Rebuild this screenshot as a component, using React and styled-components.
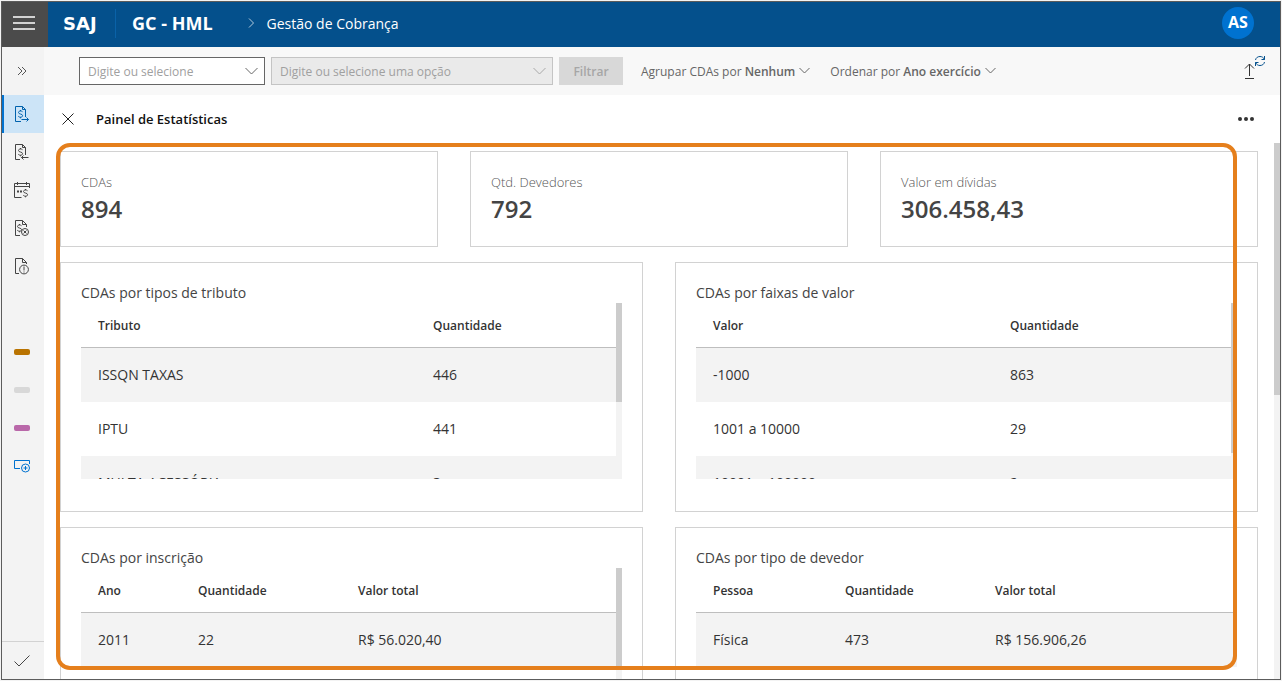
import React from "react";
import styled, { createGlobalStyle } from "styled-components";

const GlobalStyle = createGlobalStyle`
  * { box-sizing: border-box; }
  body {
    margin: 0;
    background: #f3f3f3;
    color: #333;
    font-family: "Open Sans", "Noto Sans", sans-serif;
    font-size: 14px;
  }
  button, input { font: inherit; color: inherit; }
  h1, h2, p, dl, dd { margin: 0; }
`;

const Frame = styled.div`
  position: relative;
  display: flex;
  flex-direction: column;
  height: calc(100vh - 2px);
  margin: 1px;
  border: 1px solid #5c5c5c;
  background: #fff;
`;

const Header = styled.header`
  display: flex;
  flex: none;
  height: 45px;
  background: #04508c;
  color: #fff;
`;

const HeaderContent = styled.div`
  display: flex;
  align-items: center;
  flex: 1;
  padding: 0 26px 3px 0;
`;

const PlainButton = styled.button`
  display: inline-flex;
  align-items: center;
  justify-content: center;
  padding: 0;
  border: 0;
  background: transparent;
  cursor: pointer;
`;

const MenuButton = styled(PlainButton)`
  width: 46px;
  padding-bottom: 4px;
  padding-right: 2px;
  background: #4b4b4b;
  color: #fff;
`;

const Brand = styled.a`
  width: 67px;
  padding-left: 15px;
  color: #fff;
  font-family: "DejaVu Sans", sans-serif;
  font-size: 18px;
  font-weight: 700;
  text-decoration: none;
`;

const Environment = styled.span`
  margin-right: 35px;
  padding-left: 16px;
  border-left: 1px solid #0a62a8;
  font-size: 18px;
  font-weight: 700;
  line-height: 29px;
`;

const CrumbArrow = styled.svg`
  flex: none;
  opacity: 0.7;
`;

const Crumb = styled.span`
  margin-left: 12px;
`;

const Avatar = styled(PlainButton)`
  width: 32px;
  height: 32px;
  margin-left: auto;
  padding-bottom: 2px;
  border-radius: 50%;
  background: #0072d0;
  color: #fff;
  font-size: 16px;
  font-weight: 700;
`;

const Body = styled.div`
  display: flex;
  flex: 1;
  min-height: 0;
`;

const Sidebar = styled.nav`
  display: flex;
  flex-direction: column;
  flex: none;
  width: 42px;
  background: #f3f3f3;
`;

const ExpandButton = styled(PlainButton)`
  height: 48px;
  padding-right: 2px;
  color: #555;
`;

const NavButton = styled(PlainButton)`
  height: 38px;
  border-left: 2px solid ${(p) => (p.$active ? "#0072d0" : "transparent")};
  padding-right: 4px;
  background: ${(p) => (p.$active ? "#cce4f7" : "transparent")};
  color: ${(p) => (p.$active ? "#0062ad" : p.$accent ? "#0072d0" : "#444")};
`;

const TagGroup = styled.div`
  display: flex;
  flex-direction: column;
  margin-top: 48px;
`;

const Tag = styled.span`
  width: 16px;
  height: 6px;
  border-radius: 2px;
  background: ${(p) => p.$color};
`;

const ConfirmButton = styled(PlainButton)`
  height: 38px;
  margin-top: auto;
  padding-right: 2px;
  border-top: 1px solid #d2d2d2;
  color: #444;
`;

const Main = styled.main`
  display: flex;
  flex-direction: column;
  flex: 1;
  min-width: 0;
`;

const Toolbar = styled.div`
  display: flex;
  align-items: center;
  flex: none;
  height: 48px;
  padding: 0 14px 0 35px;
  background: #f8f8f8;
  color: #666;
  font-size: 12px;
`;

const Combo = styled.div`
  display: flex;
  align-items: center;
  width: ${(p) => p.$width}px;
  height: 28px;
  margin-right: 6px;
  padding: 0 6px 0 8px;
  border: 1px solid ${(p) => (p.$disabled ? "#c4c4c4" : "#666")};
  background: ${(p) => (p.$disabled ? "#eaeaea" : "#fff")};
  color: ${(p) => (p.$disabled ? "#a8a8a8" : "#666")};
`;

const ComboInput = styled.input`
  flex: 1;
  min-width: 0;
  padding: 0;
  border: 0;
  outline: 0;
  background: transparent;
  &::placeholder { color: #a0a0a0; opacity: 1; }
`;

const FilterButton = styled.button`
  width: 64px;
  height: 28px;
  margin-right: 18px;
  padding: 0;
  border: 0;
  background: #d8d8d8;
  color: #a6a6a6;
  font-weight: 600;
`;

const SortButton = styled(PlainButton)`
  gap: 4px;
  margin-right: 20px;
  b { font-weight: 600; }
`;

const SyncButton = styled(PlainButton)`
  margin-left: auto;
`;

const PanelHeader = styled.div`
  display: flex;
  align-items: center;
  flex: none;
  height: 48px;
  padding: 0 26px 0 18px;
`;

const PanelTitle = styled.h1`
  margin-left: 22px;
  color: #111;
  font-size: 13px;
  font-weight: 600;
`;

const MoreButton = styled(PlainButton)`
  margin-left: auto;
`;

const Scroller = styled.div`
  display: flex;
  min-height: 0;
  ${(p) => (p.$height ? `height: ${p.$height}px;` : "flex: 1;")}
`;

const ScrollView = styled.div`
  flex: 1;
  min-width: 0;
  overflow: hidden auto;
  scrollbar-width: none;
`;

const ScrollTrack = styled.div`
  flex: none;
  width: 6px;
  background: #f3f3f3;
`;

const ScrollThumb = styled.div`
  height: ${(p) => p.$share}%;
  background: #ccc;
`;

const Grid = styled.div`
  display: grid;
  grid-template-columns: repeat(6, 1fr);
  column-gap: 32px;
  row-gap: 15px;
  padding: 8px 16px;
`;

const Stat = styled.dl`
  grid-column: span 2;
  height: 96px;
  padding: 20px;
  border: 1px solid #d2d2d2;
`;

const StatLabel = styled.dt`
  color: #555;
  font-size: 13px;
  font-weight: 300;
  line-height: 20px;
`;

const StatValue = styled.dd`
  color: #444;
  font-size: 24px;
  font-weight: 600;
  line-height: 34px;
`;

const Card = styled.section`
  grid-column: span 3;
  height: 250px;
  padding: 20px;
  border: 1px solid #d2d2d2;
`;

const CardTitle = styled.h2`
  color: #444;
  font-size: 14px;
  font-weight: 400;
  line-height: 20px;
`;

const Table = styled.table`
  width: 100%;
  border-collapse: separate;
  border-spacing: 0;
  table-layout: fixed;
  text-align: left;
`;

const HeadCell = styled.th`
  width: ${(p) => (p.$width ? `${p.$width}px` : "auto")};
  height: 45px;
  padding: 0 0 0 17px;
  border-bottom: 1px solid #bebebe;
  font-size: 12px;
  font-weight: 600;
`;

const Row = styled.tr`
  &:nth-child(odd) { background: #f3f3f3; }
`;

const Cell = styled.td`
  height: 54px;
  padding: 0 0 2px 17px;
`;

const Highlight = styled.div`
  position: absolute;
  inset: 141px 43px 9px 54px;
  border: 4px solid #e57f1c;
  border-radius: 14px;
  pointer-events: none;
`;

const Svg = ({ w = 16, h = 16, children, ...rest }) => (
  <svg width={w} height={h} viewBox={`0 0 ${w} ${h}`} fill="none" stroke="currentColor" aria-hidden="true" {...rest}>
    {children}
  </svg>
);

const ChevronDown = ({ w = 12 }) => (
  <Svg w={w} h={8}><path d={`M.5 1 ${w / 2} ${w / 2 + 0.5} ${w - 0.5} 1`} /></Svg>
);

const Dollar = ({ x = 0, y = 0 }) => (
  <path transform={`translate(${x} ${y})`} d="M5.5 1.7C5 1.1 4.300 1 3.500 1 2.300 1 1.500 1.600 1.500 2.500 1.500 4.500 5.600 3.600 5.600 5.700 5.600 6.700 4.700 7.200 3.500 7.200 2.600 7.200 1.900 7 1.300 6.300M3.500 0V1M3.500 7.200V8.300" />
);

const DocOut = () => (
  <Svg w={16} h={18}>
    <path d="M7 16.500H1.500V1.500H8.500L11.500 4.500V12M8.500 1.500V4.500H11.500M7.500 14.500H14.500M12.500 12.500 14.500 14.500 12.500 16.500" />
    <Dollar x={3} y={5} />
  </Svg>
);

const DocIn = () => (
  <Svg w={16} h={18}>
    <path d="M6 16.500H1.500V1.500H8.500L11.500 4.500V12M8.500 1.500V4.500H11.500M7.500 14.500H14.500M9.500 12.500 7.500 14.500 9.500 16.500" />
    <Dollar x={3} y={5} />
  </Svg>
);

const CalendarMoney = () => (
  <Svg w={16} h={18}>
    <path d="M7.500 16.500H.5V2.500H15.500V7M.5 5.500H15.500M3.500 1V4M12.500 1V4" />
    <path d="M3 10.500H5M6 10.500H8" strokeWidth="2" />
    <Dollar x={8} y={8} />
  </Svg>
);

const DocBlocked = () => (
  <Svg w={16} h={18}>
    <path d="M6 16.500H1.500V1.500H8.500L12.500 5.500V8M8.500 1.500V5.500H12.500" />
    <Dollar x={2} y={5} />
    <circle cx="11" cy="13" r="3.500" />
    <path d="M9.500 11.500 12.500 14.500M12.500 11.500 9.500 14.500" />
  </Svg>
);

const DocAlert = () => (
  <Svg w={16} h={18}>
    <path d="M5 16.500H1.500V1.500H8.500L12.500 5.500V7M8.500 1.500V5.500H12.500" />
    <circle cx="10" cy="12.500" r="4.400" />
    <path d="M10 9.500V13.500M10 14.500V15.500" />
  </Svg>
);

const AddTag = () => (
  <Svg w={16} h={14}>
    <path d="M6 9.500H.5V1.500H15.500V5" />
    <circle cx="11.500" cy="9" r="4" />
    <path d="M9.500 9H13.500M11.500 7V11" />
  </Svg>
);

const navItems = [
  { label: "Enviar CDAs", Icon: DocOut, active: true },
  { label: "Receber CDAs", Icon: DocIn },
  { label: "Parcelamentos", Icon: CalendarMoney },
  { label: "CDAs canceladas", Icon: DocBlocked },
  { label: "Pendências", Icon: DocAlert },
];

const tags = [
  { label: "Marcador laranja", color: "#b97300" },
  { label: "Marcador cinza", color: "#d8d8d8" },
  { label: "Marcador lilás", color: "#b968a9" },
];

const stats = [
  ["CDAs", "894"],
  ["Qtd. Devedores", "792"],
  ["Valor em dívidas", "306.458,43"],
];

const cards = [
  {
    title: "CDAs por tipos de tributo",
    thumb: 56,
    columns: [["Tributo", 335], ["Quantidade"]],
    rows: [["ISSQN TAXAS", "446"], ["IPTU", "441"], ["MULTA ACESSÓRIA", "3"]],
  },
  {
    title: "CDAs por faixas de valor",
    thumb: 85,
    columns: [["Valor", 297], ["Quantidade"]],
    rows: [["-1000", "863"], ["1001 a 10000", "29"], ["10001 a 100000", "2"]],
  },
  {
    title: "CDAs por inscrição",
    thumb: 56,
    columns: [["Ano", 100], ["Quantidade", 160], ["Valor total"]],
    rows: [["2011", "22", "R$ 56.020,40"]],
  },
  {
    title: "CDAs por tipo de devedor",
    columns: [["Pessoa", 132], ["Quantidade", 150], ["Valor total"]],
    rows: [["Física", "473", "R$ 156.906,26"]],
  },
];

const ScrollArea = ({ height, thumb, children }) => (
  <Scroller $height={height}>
    <ScrollView>{children}</ScrollView>
    {thumb && <ScrollTrack><ScrollThumb $share={thumb} /></ScrollTrack>}
  </Scroller>
);

const DataCard = ({ title, thumb, columns, rows }) => (
  <Card>
    <CardTitle>{title}</CardTitle>
    <ScrollArea height={176} thumb={thumb}>
      <Table aria-label={title}>
        <thead>
          <tr>
            {columns.map(([name, width]) => (
              <HeadCell key={name} scope="col" $width={width}>{name}</HeadCell>
            ))}
          </tr>
        </thead>
        <tbody>
          {rows.map((row) => (
            <Row key={row[0]}>{row.map((value, i) => <Cell key={i}>{value}</Cell>)}</Row>
          ))}
        </tbody>
      </Table>
    </ScrollArea>
  </Card>
);

export default function App() {
  return (
    <>
      <GlobalStyle />
      <Frame>
        <Header>
          <MenuButton aria-label="Menu">
            <Svg w={22} h={14} strokeWidth="1.500"><path d="M0 1H22M0 7H22M0 13H22" /></Svg>
          </MenuButton>
          <HeaderContent>
            <Brand href="#">SAJ</Brand>
            <Environment>GC - HML</Environment>
            <CrumbArrow width="7" height="10" viewBox="0 0 7 10" fill="none" stroke="currentColor" aria-hidden="true">
              <path d="M1 .5 5.500 5 1 9.500" />
            </CrumbArrow>
            <Crumb>Gestão de Cobrança</Crumb>
            <Avatar aria-label="Usuário AS">AS</Avatar>
          </HeaderContent>
        </Header>
        <Body>
          <Sidebar>
            <ExpandButton aria-label="Expandir">
              <Svg w={10} h={10}><path d="M1 1 5 5 1 9M5 1 9 5 5 9" /></Svg>
            </ExpandButton>
            {navItems.map(({ label, Icon, active }) => (
              <NavButton key={label} aria-label={label} $active={active}><Icon /></NavButton>
            ))}
            <TagGroup>
              {tags.map(({ label, color }) => (
                <NavButton key={label} aria-label={label}><Tag $color={color} /></NavButton>
              ))}
              <NavButton aria-label="Adicionar marcador" $accent><AddTag /></NavButton>
            </TagGroup>
            <ConfirmButton aria-label="Confirmar">
              <Svg w={16} h={12}><path d="M.5 6.500 5 11 15.500.5" /></Svg>
            </ConfirmButton>
          </Sidebar>
          <Main>
            <Toolbar>
              <Combo $width={186}>
                <ComboInput aria-label="Campo" placeholder="Digite ou selecione" />
                <ChevronDown w={13} />
              </Combo>
              <Combo $width={282} $disabled>
                <ComboInput aria-label="Opção" placeholder="Digite ou selecione uma opção" disabled />
                <ChevronDown w={13} />
              </Combo>
              <FilterButton disabled>Filtrar</FilterButton>
              <SortButton>
                <span>Agrupar CDAs por <b>Nenhum</b></span>
                <ChevronDown w={11} />
              </SortButton>
              <SortButton>
                <span>Ordenar por <b>Ano exercício</b></span>
                <ChevronDown w={11} />
              </SortButton>
              <SyncButton aria-label="Sincronizar">
                <Svg w={24} h={30}>
                  <path d="M7.500 20V8M3 12.500 7.500 8 12 12.500M3 22.500H12" stroke="#333" />
                  <path d="M13.500 4C14 1.500 16 .5 18 .5 20 .5 21.500 1.500 22.500 3.500M22.500 0V3.500H19.500M22.500 6C22 8.500 20 9.500 18 9.500 16 9.500 14.500 8.500 13.500 6.500M13.500 10V6.500H16.500" stroke="#04508c" />
                </Svg>
              </SyncButton>
            </Toolbar>
            <PanelHeader>
              <PlainButton aria-label="Fechar">
                <Svg w={12} h={12} stroke="#222"><path d="M.5.5 11.500 11.500M11.500.5.5 11.500" /></Svg>
              </PlainButton>
              <PanelTitle>Painel de Estatísticas</PanelTitle>
              <MoreButton aria-label="Mais opções">
                <Svg w={16} h={4} stroke="none" fill="#333">
                  <circle cx="2" cy="2" r="2" /><circle cx="8" cy="2" r="2" /><circle cx="14" cy="2" r="2" />
                </Svg>
              </MoreButton>
            </PanelHeader>
            <ScrollArea thumb={47}>
              <Grid>
                {stats.map(([label, value]) => (
                  <Stat key={label}>
                    <StatLabel>{label}</StatLabel>
                    <StatValue>{value}</StatValue>
                  </Stat>
                ))}
                {cards.map((card) => <DataCard key={card.title} {...card} />)}
              </Grid>
            </ScrollArea>
          </Main>
        </Body>
        <Highlight />
      </Frame>
    </>
  );
}
